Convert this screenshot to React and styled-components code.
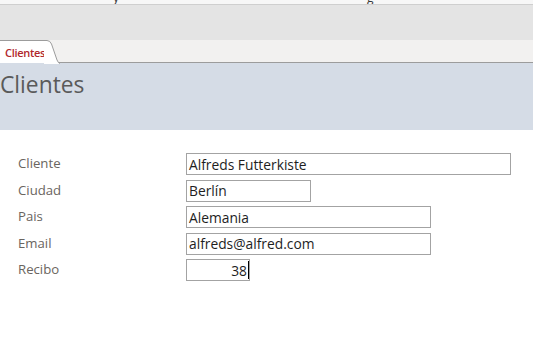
import React from "react";
import styled, { createGlobalStyle } from "styled-components";

const GlobalStyle = createGlobalStyle`
  html, body {
    margin: 0;
    padding: 0;
    background: #ffffff;
    font-family: "Open Sans", "Noto Sans", sans-serif;
  }
`;

const fields = [
  { label: "Cliente", value: "Alfreds Futterkiste", width: 325 },
  { label: "Ciudad", value: "Berlín", width: 125 },
  { label: "Pais", value: "Alemania", width: 245 },
  { label: "Email", value: "alfreds@alfred.com", width: 245 },
  { label: "Recibo", value: "38", width: 64, numeric: true },
];

function App() {
  return (
    <>
      <GlobalStyle />
      <Page>
        <TopStrip>
          <Clipped style={{ marginLeft: 113 }}>y</Clipped>
          <Clipped style={{ marginLeft: 248 }}>g</Clipped>
        </TopStrip>
        <Ribbon />
        <TabBar>
          <Tab>
            Clientes
            <TabEdge width="16" height="24" viewBox="0 0 16 24">
              <path d="M0 0.5 H3 Q6 0.5 7.5 4 L13 20 Q14.5 23.5 16 23.5 V24 H0 Z" fill="#ffffff" />
              <path d="M0 0.5 H3 Q6 0.5 7.5 4 L13 20 Q14.5 23.5 16 23.5" fill="none" stroke="#9c9c9c" strokeWidth="1" />
            </TabEdge>
          </Tab>
        </TabBar>
        <Header>
          <Title>Clientes</Title>
        </Header>
        <Form>
          {fields.map((f, idx) => (
            <Row key={`field_${idx}`}>
              <Label>{f.label}</Label>
              <Field style={{ width: f.width }} $numeric={f.numeric}>
                {f.value}
                {f.numeric && <Caret />}
              </Field>
            </Row>
          ))}
        </Form>
      </Page>
    </>
  );
}

const Page = styled.div`
  width: 533px;
  height: 361px;
  overflow: hidden;
  background: #ffffff;
`;

const TopStrip = styled.div`
  height: 4px;
  display: flex;
  align-items: flex-end;
  overflow: hidden;
  background: #f7f7f7;
  border-bottom: 1px solid #cfcfcf;
`;

const Clipped = styled.span`
  font-size: 12px;
  line-height: 14px;
  margin-bottom: -1px;
  color: #333333;
`;

const Ribbon = styled.div`
  height: 35px;
  background: #e4e4e4;
`;

const TabBar = styled.div`
  height: 22px;
  display: flex;
  align-items: flex-end;
  background: #f2f1f0;
  border-bottom: 1px solid #9c9c9c;
`;

const Tab = styled.div`
  position: relative;
  height: 22px;
  margin-bottom: -1px;
  padding: 0 0 0 5px;
  display: flex;
  align-items: center;
  white-space: nowrap;
  background: #ffffff;
  border-top: 1px solid #9c9c9c;
  font-size: 11px;
  font-weight: 600;
  color: #b0272c;
  letter-spacing: -0.3px;
`;

const TabEdge = styled.svg`
  position: absolute;
  right: -15px;
  top: -1px;
`;

const Header = styled.div`
  height: 67px;
  background: #d5dce6;
`;

const Title = styled.div`
  padding-top: 7px;
  font-size: 22.8px;
  line-height: 30px;
  color: #5a5a5a;
`;

const Form = styled.div`
  display: flex;
  flex-direction: column;
  gap: 4.5px;
  padding-top: 23px;
`;

const Row = styled.div`
  display: flex;
  align-items: center;
  height: 22px;
`;

const Label = styled.div`
  width: 168px;
  padding-left: 18px;
  margin-top: -2px;
  font-size: 13.2px;
  color: #6a6560;
`;

const Field = styled.div`
  box-sizing: border-box;
  height: 22px;
  display: flex;
  align-items: center;
  justify-content: ${(p) => (p.$numeric ? "flex-end" : "flex-start")};
  padding: 0 ${(p) => (p.$numeric ? "0" : "2px")} 0 2px;
  border: 1px solid #a3a3a3;
  font-size: 13.8px;
  color: #1e1e1e;
  white-space: nowrap;
`;

const Caret = styled.span`
  width: 1px;
  height: 18px;
  margin-left: 1px;
  background: #000000;
`;

export default App;
